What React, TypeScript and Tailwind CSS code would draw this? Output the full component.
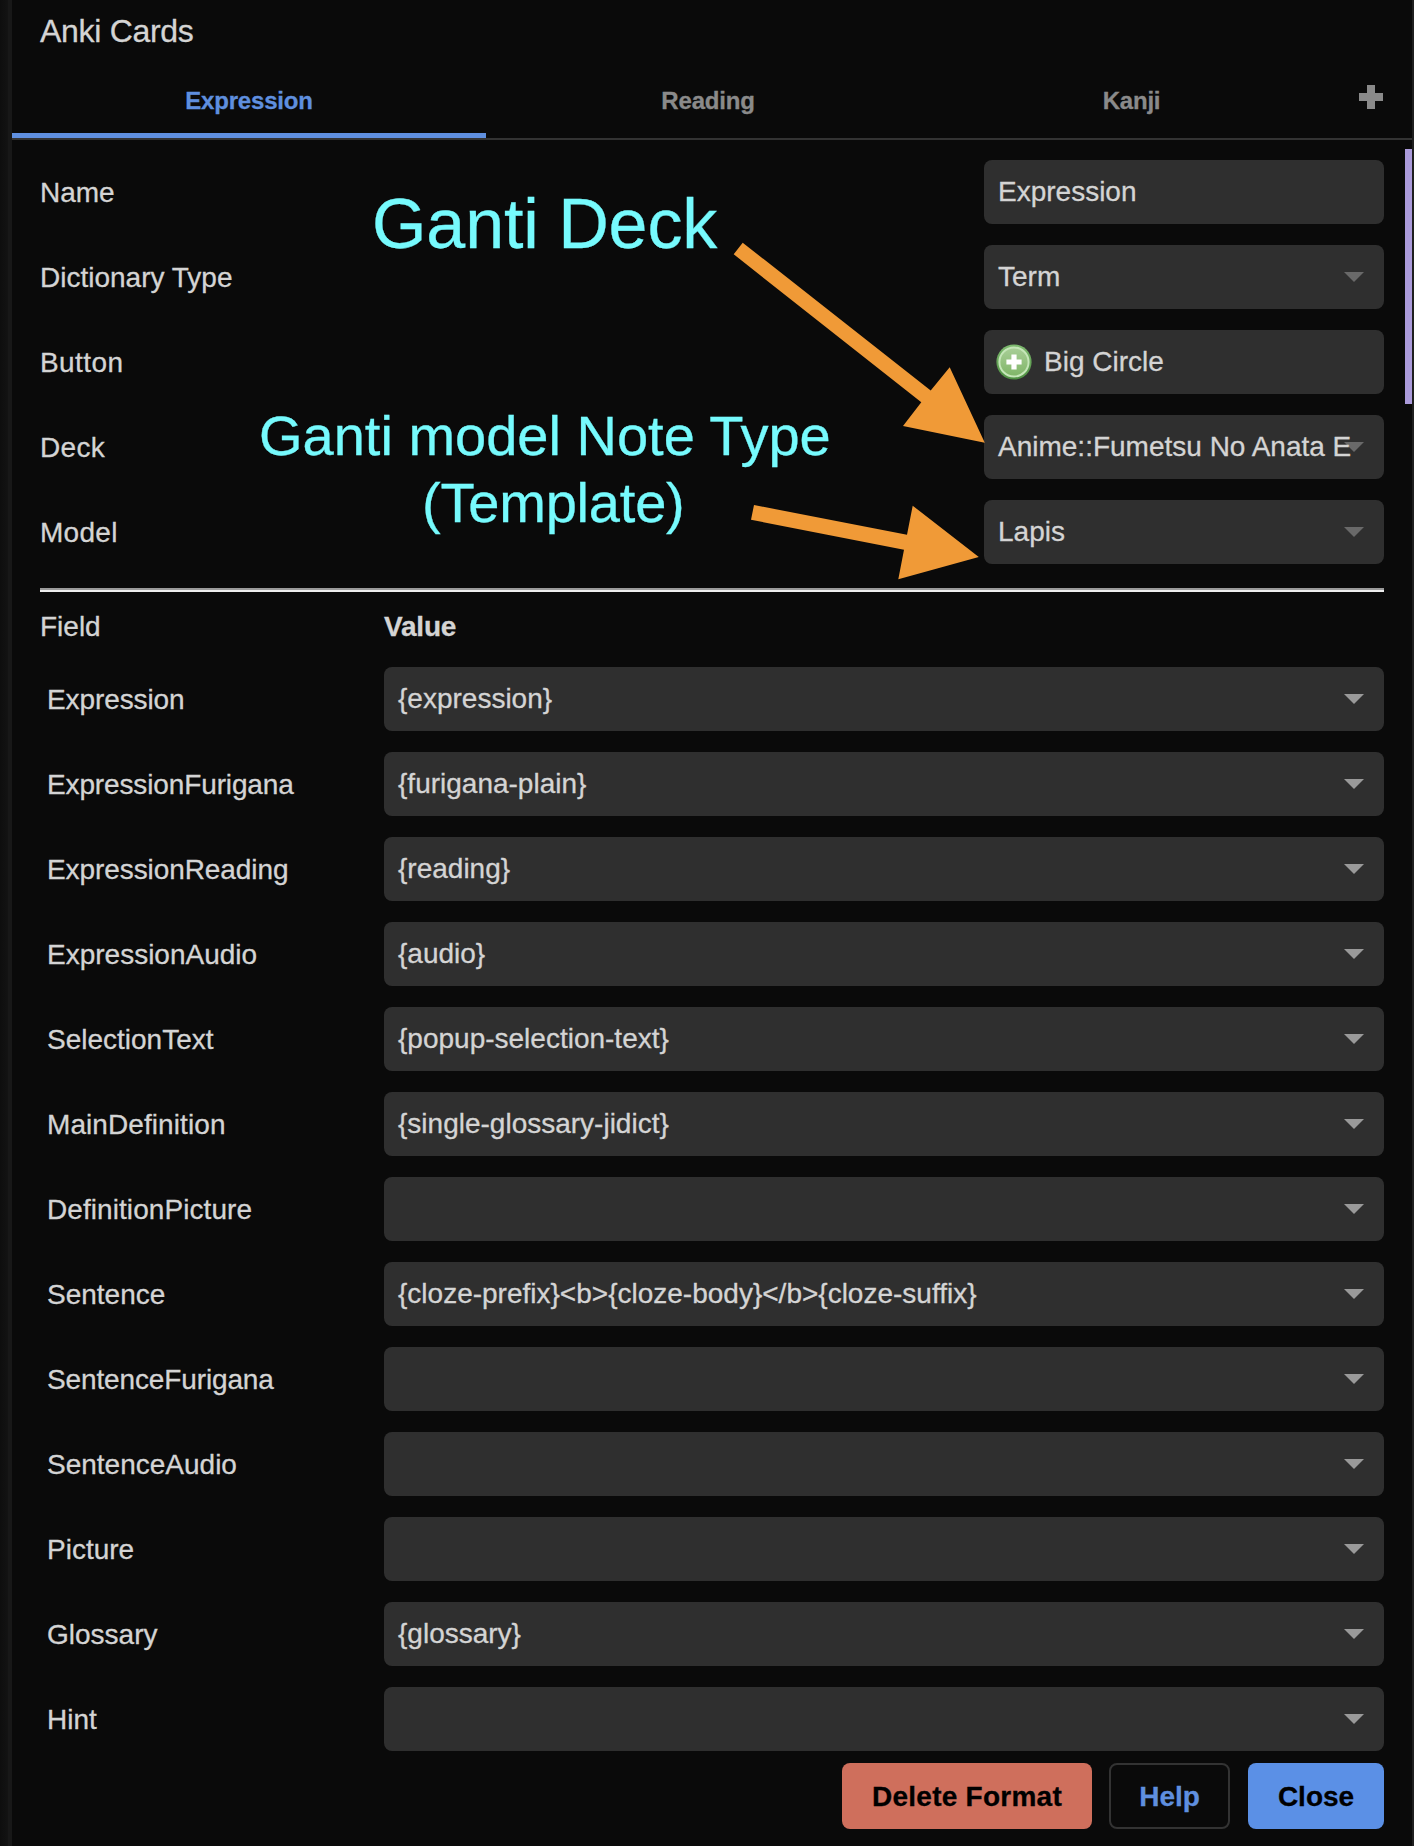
import React from 'react';

const settings = [
  { label: 'Name', value: 'Expression', kind: 'text', tracking: '' },
  { label: 'Dictionary Type', value: 'Term', kind: 'select', tracking: '' },
  { label: 'Button', value: 'Big Circle', kind: 'icon', tracking: 'tracking-[0.4px]' },
  { label: 'Deck', value: 'Anime::Fumetsu No Anata E', kind: 'select', tracking: 'tracking-[0.3px]' },
  { label: 'Model', value: 'Lapis', kind: 'select', tracking: 'tracking-[0.3px]' },
];

const fields = [
  ['Expression', '{expression}', 'tracking-[-0.1px]'],
  ['ExpressionFurigana', '{furigana-plain}', 'tracking-[-0.13px]'],
  ['ExpressionReading', '{reading}', 'tracking-[-0.08px]'],
  ['ExpressionAudio', '{audio}', ''],
  ['SelectionText', '{popup-selection-text}', ''],
  ['MainDefinition', '{single-glossary-jidict}', 'tracking-[0.08px]'],
  ['DefinitionPicture', '', 'tracking-[0.07px]'],
  ['Sentence', '{cloze-prefix}<b>{cloze-body}</b>{cloze-suffix}', ''],
  ['SentenceFurigana', '', 'tracking-[-0.13px]'],
  ['SentenceAudio', '', ''],
  ['Picture', '', ''],
  ['Glossary', '{glossary}', ''],
  ['Hint', '', ''],
];

function Caret({ className }: { className: string }) {
  return (
    <svg viewBox="0 0 20 10" className={`h-[10px] w-[20px] shrink-0 ${className}`}>
      <path d="M0 0H20L10 10Z" fill="currentColor" />
    </svg>
  );
}

function CircleIcon() {
  return (
    <svg viewBox="0 0 36 36" className="-ml-0.5 mr-[12px] h-9 w-9 shrink-0">
      <defs>
        <linearGradient id="ring" x1="0" y1="0" x2="0" y2="1">
          <stop offset="0" stopColor="#7fbb70" />
          <stop offset="1" stopColor="#4e8f42" />
        </linearGradient>
        <linearGradient id="fill" x1="0" y1="0" x2="0" y2="1">
          <stop offset="0" stopColor="#a9cf98" />
          <stop offset="1" stopColor="#7fb567" />
        </linearGradient>
      </defs>
      <circle cx="18" cy="18" r="17.6" fill="url(#ring)" />
      <circle cx="18" cy="18" r="14.6" fill="url(#fill)" stroke="#c5e6b8" strokeWidth="2" />
      <path d="M15.4 10.4h5.2v5h5v5.2h-5v5h-5.2v-5h-5v-5.2h5z" fill="#fff" />
    </svg>
  );
}

export default function App() {
  return (
    <div className="relative flex h-[1846px] w-[1414px] overflow-hidden bg-[#0a0a0a] font-['Liberation_Sans',Arial,sans-serif] text-[28px] leading-8 text-[#d4d4d4] [-webkit-text-stroke:0.3px_currentColor]">
      <div className="w-3 shrink-0 border-r-4 border-[#181818] bg-linear-to-r from-[#0e0e0e] to-[#131313]" />
      <main className="flex w-[1400px] shrink-0 flex-col">
        <h1 className="h-[64px] pl-7 pt-[12px] text-[32px] leading-[38px] tracking-[-0.3px]">Anki Cards</h1>

        <nav className="flex h-[76px] shrink-0 border-b-2 border-[#333333] text-2xl font-bold tracking-[-0.2px] text-[#8a8a8a]">
          <button className="w-[474px] border-b-[5px] border-[#5f8fdf] pt-[5px] text-[#5f8fdf]">Expression</button>
          <button className="w-[444px]">Reading</button>
          <button className="w-[403px]">Kanji</button>
          <button className="flex w-[76px] justify-center pt-[21px]">
            <svg viewBox="0 0 24 24" className="h-6 w-6">
              <path d="M8 0h8v8h8v8h-8v8H8v-8H0V8h8z" fill="currentColor" />
            </svg>
          </button>
        </nav>

        <section className="flex flex-col gap-[21px] pl-7 pr-7 pt-5">
          {settings.map((s) => (
            <div key={s.label} className="flex h-16 items-center justify-between">
              <span className={`pt-0.5 ${s.tracking}`}>{s.label}</span>
              <div className="flex h-16 w-[400px] items-center rounded-lg bg-[#2f2f2f] pl-3.5 pr-5">
                {s.kind === 'icon' && <CircleIcon />}
                <span className="relative z-10 w-0 grow whitespace-nowrap">{s.value}</span>
                {s.kind === 'select' && <Caret className="text-[#696969]" />}
              </div>
            </div>
          ))}
        </section>

        <div className="mx-7 mt-6 h-1 shrink-0 border-b-2 border-[#eeeeee] bg-[#9a9a9a]" />

        <div className="flex h-[75px] shrink-0 pl-7 pt-[19px]">
          <span className="w-[344px]">Field</span>
          <span className="font-bold tracking-[-0.2px]">Value</span>
        </div>

        <section className="flex flex-col gap-[21px] px-7">
          {fields.map(([label, value, tracking]) => (
            <div key={label} className="flex h-16 items-center">
              <span className={`w-[344px] pl-[7px] pt-0.5 ${tracking}`}>{label}</span>
              <div className="flex h-16 w-[1000px] items-center justify-between rounded-lg bg-[#2f2f2f] pl-3.5 pr-5">
                <span>{value}</span>
                <Caret className="text-[#9a9a9a]" />
              </div>
            </div>
          ))}
        </section>

        <footer className="flex justify-end pr-7 pt-3 font-bold">
          <button className="mr-[17px] h-[66px] w-[250px] rounded-lg bg-[#cf6f5c] pt-0.5 tracking-[0.25px] text-black">Delete Format</button>
          <button className="mr-[18px] h-[66px] w-[121px] rounded-lg border-2 border-[#333333] pt-0.5 text-[#5f8fdf]">Help</button>
          <button className="h-[66px] w-[136px] rounded-lg bg-[#5b90e6] pt-0.5 text-black">Close</button>
        </footer>
      </main>
      <div className="w-0.5 shrink-0 bg-[#1f1f1f]" />

      <div className="absolute left-[1405px] top-[149px] h-[255px] w-[7px] bg-[#ab9bda]" />

      <div className="absolute left-[372px] top-[184px] whitespace-nowrap text-[70px] leading-[80px] tracking-[-0.1px] text-[#76fafd]">Ganti Deck</div>
      <div className="absolute left-[259px] top-[402px] whitespace-nowrap text-[56px] leading-[67px] text-[#76fafd]">Ganti model Note Type</div>
      <div className="absolute left-[422px] top-[469px] whitespace-nowrap text-[56px] leading-[67px] tracking-[-0.2px] text-[#76fafd]">(Template)</div>
      <svg viewBox="730 240 256 342" className="absolute left-[730px] top-[240px] h-[342px] w-[256px]" fill="#f09a37">
        <path d="M742.7 242.7L930.7 390.5L949.7 367.3L984.8 442.8L903 426L921.3 402.3L733.7 254.3Z" />
        <path d="M754 505L907 534.7L912.7 505.7L978.8 557L898.3 579.3L904 549.8L751 519.8Z" />
      </svg>
    </div>
  );
}
